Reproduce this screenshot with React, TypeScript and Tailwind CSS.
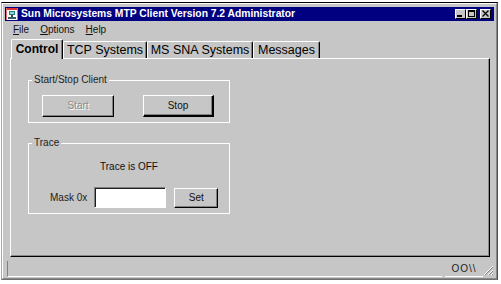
import React from "react";

const GRAY = "bg-[#c6c6c6]";

function AppIcon() {
  return (
    <svg width="12" height="12" viewBox="0 0 12 12" className="ml-[1px] shrink-0">
      <rect x="0" y="0" width="12" height="12" fill="#ffffff" />
      <rect x="0" y="0" width="12" height="2" fill="#e03030" />
      <rect x="0" y="0" width="1" height="12" fill="#e07070" />
      <rect x="11" y="0" width="1" height="12" fill="#e07070" />
      <rect x="3" y="3" width="6" height="4" fill="#208080" />
      <rect x="4" y="4" width="4" height="2" fill="#9fd0d0" />
      <rect x="5" y="7" width="2" height="2" fill="#404040" />
      <rect x="2" y="9" width="8" height="2" fill="#306060" />
    </svg>
  );
}

function TitleButton({ kind }: { kind: "min" | "max" | "close" }) {
  return (
    <div className="w-[11px] h-[10px] bg-[#c6c6c6] border-t border-l border-t-white border-l-white border-r border-b border-r-black border-b-black flex items-center justify-center">
      <svg width="9" height="8" viewBox="0 0 9 8">
        {kind === "min" && <rect x="1" y="5" width="5" height="2" fill="#000" />}
        {kind === "max" && (
          <g>
            <rect x="1" y="0" width="7" height="2" fill="#000" />
            <rect x="1" y="0" width="1" height="7" fill="#000" />
            <rect x="7" y="0" width="1" height="7" fill="#000" />
            <rect x="1" y="6" width="7" height="1" fill="#000" />
          </g>
        )}
        {kind === "close" && (
          <path d="M1.5 0.5 L7.5 6.5 M7.5 0.5 L1.5 6.5" stroke="#000" strokeWidth="1.3" />
        )}
      </svg>
    </div>
  );
}

function Button({
  label,
  w,
  h,
  disabled,
  isDefault,
}: {
  label: string;
  w: string;
  h: string;
  disabled?: boolean;
  isDefault?: boolean;
}) {
  const base =
    "flex items-center justify-center text-[10px] leading-none border-t border-l border-t-white border-l-white " +
    (isDefault
      ? "border-r-2 border-b-2 border-r-black border-b-black shadow-[inset_-1px_-1px_0_#808080]"
      : "border-r border-b border-r-black border-b-black shadow-[inset_-1px_-1px_0_#808080]");
  return (
    <div className={`${base} ${w} ${h}`}>
      <span
        className={
          disabled
            ? "text-[#8c8c8c] [text-shadow:1px_1px_0_#ffffff]"
            : "text-[#111]"
        }
      >
        {label}
      </span>
    </div>
  );
}

function Group({
  label,
  className,
  children,
}: {
  label: string;
  className: string;
  children: React.ReactNode;
}) {
  return (
    <div className={`relative border border-white w-[202px] ${className}`}>
      <span className="absolute left-[3px] top-[-7px] px-[2px] bg-[#c6c6c6] leading-[12px] text-[10px] text-[#222]">
        {label}
      </span>
      {children}
    </div>
  );
}

function Tab({
  label,
  w,
  selected,
  ml,
}: {
  label: string;
  w: string;
  selected?: boolean;
  ml?: string;
}) {
  return (
    <div
      className={
        `${w} ${ml ?? ""} ${GRAY} flex items-center justify-center border-t border-l border-t-white border-l-white border-r border-r-black shadow-[inset_-1px_0_0_#808080] rounded-tl-[2px] rounded-tr-[2px] leading-none text-black ` +
        (selected
          ? "relative z-10 h-[20px] mt-[1px] -mb-[1px] font-bold text-[12px] pb-[2px]"
          : "h-[17px] mt-[3px] text-[12.5px]")
      }
    >
      {label}
    </div>
  );
}

export default function App() {
  return (
    <div className="w-[501px] h-[284px] bg-white overflow-hidden font-['Liberation_Sans',Arial,sans-serif] text-[10px] text-[#111]">
      <div className="ml-[1px] mt-[2px] w-[497px] h-[278px] border border-t-black border-l-[#a8a8a8] border-r-[#505050] border-b-[#707070] bg-[#c6c6c6]">
        <div className="h-full border border-t-white border-l-white border-r-[#8a8a8a] border-b-[#8a8a8a] px-[2px] pt-[3px] flex flex-col">
          {/* Title bar */}
          <div className="h-[14px] shrink-0 bg-[#000080] flex items-center">
            <AppIcon />
            <span className="ml-[3px] text-white font-bold text-[10.3px] leading-none whitespace-nowrap">
              Sun Microsystems MTP Client Version 7.2 Administrator
            </span>
            <div className="ml-auto mr-[3px] flex items-center">
              <TitleButton kind="min" />
              <TitleButton kind="max" />
              <div className="w-[3px]" />
              <TitleButton kind="close" />
            </div>
          </div>

          {/* Menu bar */}
          <div className="h-[17px] shrink-0 flex items-center pl-[8px] gap-[11px] text-[10px] leading-none text-[#111]">
            <span>
              <u>F</u>ile
            </span>
            <span>
              <u>O</u>ptions
            </span>
            <span>
              <u>H</u>elp
            </span>
          </div>

          {/* Tabs */}
          <div className="h-[20px] shrink-0 flex items-start pl-[5px]">
            <Tab label="Control" w="w-[52px]" selected ml="ml-[1px]" />
            <Tab label="TCP Systems" w="w-[84px]" />
            <Tab label="MS SNA Systems" w="w-[106px]" />
            <Tab label="Messages" w="w-[67px]" />
          </div>

          {/* Panel */}
          <div className="ml-[5px] w-[480px] h-[199px] shrink-0 border border-t-white border-l-white border-r-black border-b-black">
            <div className="h-full border-r border-b border-r-[#8a8a8a] border-b-[#8a8a8a] pl-[17px] pt-[21px] flex flex-col">
              <Group label="Start/Stop Client" className="h-[43px]">
                <div className="flex pl-[13px] pt-[14px] gap-[29px]">
                  <Button label="Start" w="w-[72px]" h="h-[22px]" disabled />
                  <Button label="Stop" w="w-[71px]" h="h-[22px]" isDefault />
                </div>
              </Group>
              <Group label="Trace" className="h-[71px] mt-[20px]">
                <div className="flex flex-col">
                  <div className="pt-[17px] leading-[12px] text-center text-[10px] text-[#111]">
                    Trace is OFF
                  </div>
                  <div className="mt-[14px] flex items-center pl-[21px]">
                    <span className="text-[10px] text-[#222] leading-none">Mask 0x</span>
                    <div className="ml-[7px] w-[72px] h-[21px] bg-white border-t border-l border-t-[#808080] border-l-[#808080] border-b border-r border-b-white border-r-white shadow-[inset_1px_1px_0_#202020]" />
                    <div className="ml-[8px]">
                      <Button label="Set" w="w-[44px]" h="h-[20px]" />
                    </div>
                  </div>
                </div>
              </Group>
            </div>
          </div>

          {/* Status bar */}
          <div className="flex-1 flex items-start pt-[4px]">
            <div className="ml-[2px] w-[435px] h-[16px] border-l border-l-[#808080] border-b border-b-white" />
            <div className="ml-[3px] w-[38px] h-[16px] border-b border-b-white flex items-center justify-center text-[10px] leading-none text-[#222] tracking-[1px]">
              OO\\
            </div>
            <svg width="11" height="12" viewBox="0 0 11 12" className="ml-[0px] mt-[3px]">
              <path d="M10 2 L1 11" stroke="#ffffff" strokeWidth="1" />
              <path d="M10 3 L2 11" stroke="#808080" strokeWidth="1" />
              <path d="M10 6 L5 11" stroke="#ffffff" strokeWidth="1" />
              <path d="M10 7 L6 11" stroke="#808080" strokeWidth="1" />
              <path d="M10 9 L8 11" stroke="#ffffff" strokeWidth="1" />
              <path d="M10 10 L9 11" stroke="#808080" strokeWidth="1" />
            </svg>
          </div>
        </div>
      </div>
    </div>
  );
}
